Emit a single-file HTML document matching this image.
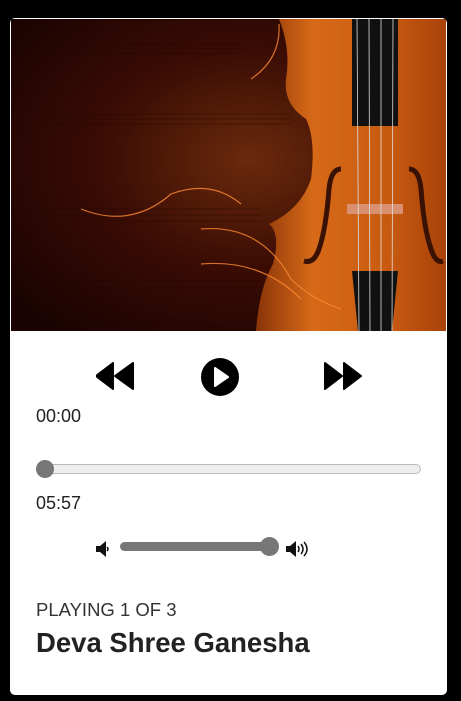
<!DOCTYPE html>
<html><head><meta charset="utf-8"><style>
html,body{margin:0;padding:0;background:#000;width:461px;height:701px;overflow:hidden;font-family:"Liberation Sans",sans-serif}
.card{position:absolute;left:10px;top:18px;width:437px;height:677px;background:#fff;border-radius:5px;overflow:hidden}
.img{position:absolute;left:1px;top:1px;width:435px;height:312px}
.t{position:absolute;color:#222;font-size:18px}
</style></head><body>
<div class="card">
<svg class="img" viewBox="0 0 435 312" width="435" height="312">
<defs>
<radialGradient id="bg" cx="0.55" cy="0.45" r="0.7">
<stop offset="0" stop-color="#6a2a0c"/><stop offset="0.5" stop-color="#3a0c04"/><stop offset="1" stop-color="#1a0302"/></radialGradient>
<linearGradient id="vb" x1="0" x2="1"><stop offset="0" stop-color="#8a3408"/><stop offset="0.3" stop-color="#d66a18"/><stop offset="0.7" stop-color="#c85a10"/><stop offset="1" stop-color="#a8420a"/></linearGradient>
</defs>
<rect width="435" height="312" fill="url(#bg)"/>
<g stroke="#1e0602" stroke-width="0.8" opacity="0.5">
<line x1="30" y1="25" x2="230" y2="25"/><line x1="30" y1="30" x2="230" y2="30"/><line x1="30" y1="35" x2="230" y2="35"/>
<line x1="30" y1="95" x2="280" y2="95"/><line x1="30" y1="100" x2="280" y2="100"/><line x1="30" y1="105" x2="280" y2="105"/>
<line x1="30" y1="190" x2="250" y2="190"/><line x1="30" y1="196" x2="250" y2="196"/><line x1="30" y1="202" x2="250" y2="202"/>
<line x1="30" y1="262" x2="250" y2="262"/><line x1="30" y1="268" x2="250" y2="268"/>
</g>
<path d="M268 0 L435 0 L435 312 L245 312 Q248 270 262 245 Q270 215 258 205 Q290 190 300 160 Q305 120 295 100 Q272 85 275 60 Q280 30 268 0Z" fill="url(#vb)"/>
<path d="M341 0 h46 v107 h-46z" fill="#111"/>
<path d="M341 252 h46 l-6 60 h-34z" fill="#111"/>
<rect x="336" y="185" width="56" height="10" fill="#d89070"/>
<g stroke="#ddd" stroke-width="0.8"><line x1="346" y1="0" x2="348" y2="312"/><line x1="358" y1="0" x2="359" y2="312"/><line x1="370" y1="0" x2="370" y2="312"/><line x1="382" y1="0" x2="381" y2="312"/></g>
<path d="M330 150 q-10 0 -12 20 q-3 40 -10 60 q-5 15 -15 12" stroke="#3a1204" stroke-width="5" fill="none"/>
<path d="M398 150 q10 0 12 20 q3 40 10 60 q5 15 12 12" stroke="#3a1204" stroke-width="5" fill="none"/>
<g stroke="#ff8a30" stroke-width="1.2" fill="none" opacity="0.8">
<path d="M70 190 Q120 210 160 175 Q200 160 230 185"/><path d="M190 210 Q250 205 280 260 Q300 280 330 290"/><path d="M190 245 Q250 240 290 280"/><path d="M240 60 Q270 40 268 5"/></g>
</svg>
<svg style="position:absolute;left:86px;top:344px" width="40" height="28" viewBox="0 0 40 28"><path d="M0 14 L17 1 V27Z M19 14 L37 1 V27Z" fill="#000" stroke="#000" stroke-linejoin="round" stroke-width="2"/></svg>
<svg style="position:absolute;left:190px;top:339px" width="40" height="40" viewBox="0 0 40 40"><circle cx="20" cy="20" r="19" fill="#000"/><path d="M15 11 L28 20 L15 29Z" fill="#fff" stroke="#fff" stroke-linejoin="round" stroke-width="2"/></svg>
<svg style="position:absolute;left:313px;top:344px" width="40" height="28" viewBox="0 0 40 28"><path d="M2 1 L19 14 L2 27Z M21 1 L38 14 L21 27Z" fill="#000" stroke="#000" stroke-linejoin="round" stroke-width="2"/></svg>
<div class="t" style="left:26px;top:388px">00:00</div>
<div style="position:absolute;left:26px;top:446px;width:383px;height:8px;background:#eee;border:1px solid #bbb;border-radius:5px"></div>
<div style="position:absolute;left:26px;top:442px;width:18px;height:18px;border-radius:50%;background:#777"></div>
<div class="t" style="left:26px;top:475px">05:57</div>
<svg style="position:absolute;left:86px;top:523px" width="14" height="16" viewBox="0 0 14 16"><path d="M0 5h4l6-5v16l-6-5h-4z" fill="#111"/><path d="M11 6q2 2 0 4" stroke="#111" stroke-width="1.5" fill="none"/></svg>
<div style="position:absolute;left:110px;top:524px;width:150px;height:9px;background:#777;border-radius:5px"></div>
<div style="position:absolute;left:250px;top:519px;width:19px;height:19px;border-radius:50%;background:#777"></div>
<svg style="position:absolute;left:276px;top:522px" width="28" height="18" viewBox="0 0 28 18"><path d="M0 6h4l6-5v16l-6-5h-4z" fill="#111"/><g stroke="#111" stroke-width="1.5" fill="none"><path d="M12 6q2 3 0 6"/><path d="M15 4q4 5 0 10"/><path d="M18 2q6 7 0 14"/></g></svg>
<div class="t" style="left:26px;top:581px;font-size:18.5px;color:#333">PLAYING 1 OF 3</div>
<div class="t" style="left:26px;top:609px;font-size:27.5px;font-weight:bold;color:#222">Deva Shree Ganesha</div>
</div>
</body></html>
